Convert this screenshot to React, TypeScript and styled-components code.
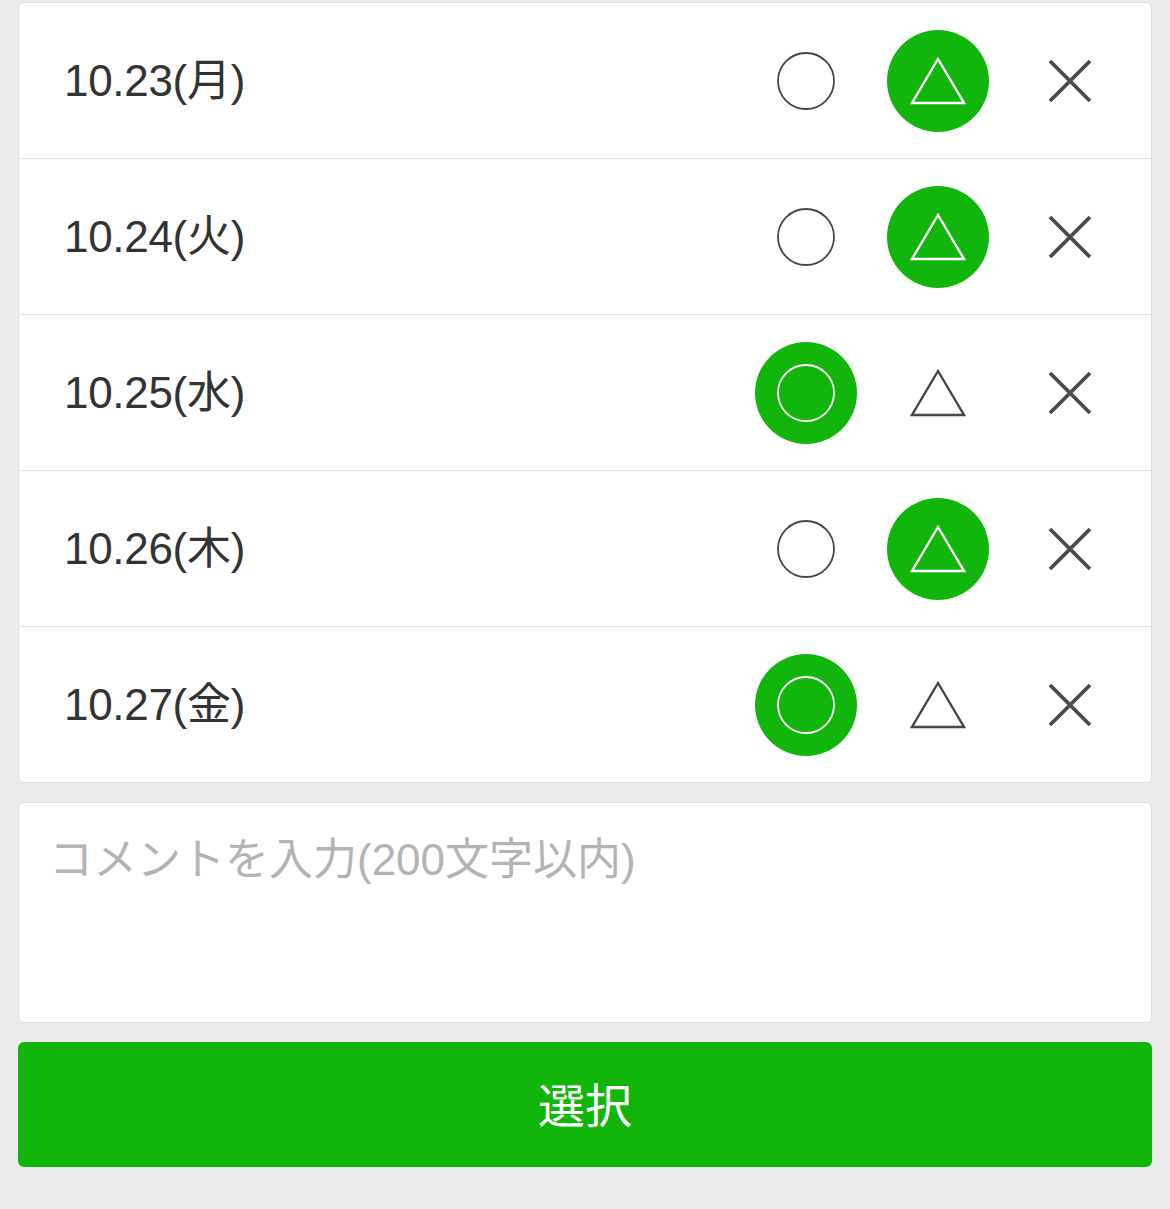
import React from 'react';
import styled, { createGlobalStyle } from 'styled-components';

const GREEN = '#11b50c';

const GlobalStyle = createGlobalStyle`
    html, body {
        margin: 0;
        padding: 0;
        background: #ececee;
    }
    body {
        font-family: 'Liberation Sans', 'Noto Sans CJK JP', sans-serif;
    }
`;

const Page = styled.div`
    display: flex;
    flex-direction: column;
    gap: 19px;
    padding: 2px 18px 43px 18px;
    min-height: 1209px;
    box-sizing: border-box;
`;

const Card = styled.div`
    background: #fff;
    border: 1px solid #dedee0;
    border-radius: 6px;
    overflow: hidden;
`;

const Row = styled.div`
    display: flex;
    align-items: center;
    height: 155px;
    padding: 0 0 0 45px;
    & + & {
        border-top: 1px solid #e3e3e5;
    }
`;

const DateLabel = styled.span`
    flex: 1;
    font-size: 44px;
    color: #333;
    letter-spacing: -0.3px;
    margin-bottom: 8px;
    font-family: 'Liberation Sans', 'Noto Sans CJK JP', sans-serif;
`;

const Choices = styled.div`
    display: grid;
    grid-template-columns: repeat(3, 132px);
    margin-right: 15px;
`;

const Choice = styled.button<{ $selected: boolean }>`
    width: 102px;
    height: 102px;
    border-radius: 50%;
    border: none;
    padding: 0;
    justify-self: center;
    display: flex;
    align-items: center;
    justify-content: center;
    cursor: pointer;
    background: ${(p) => (p.$selected ? GREEN : 'transparent')};
    color: ${(p) => (p.$selected ? '#fff' : '#474747')};
`;

const CommentBox = styled.textarea`
    display: block;
    height: 221px;
    box-sizing: border-box;
    resize: none;
    border: 1px solid #dedee0;
    border-radius: 6px;
    background: #fff;
    padding: 31px 30px;
    font-size: 44px;
    line-height: 1.2;
    letter-spacing: 0;
    font-family: 'Liberation Sans', 'Noto Sans CJK JP', sans-serif;
    color: #333;
    outline: none;
    &::placeholder {
        color: #b4b4b4;
    }
`;

const SubmitButton = styled.button`
    height: 125px;
    border: none;
    border-radius: 6px;
    background: ${GREEN};
    color: #fff;
    font-size: 47px;
    font-family: 'Noto Sans CJK JP', sans-serif;
    font-weight: 400;
    padding: 0 0 5px 0;
    cursor: pointer;
`;

type Mark = 'ok' | 'maybe' | 'ng';

const CircleIcon = () => (
    <svg width="58" height="58" viewBox="0 0 58 58">
        <circle cx="29" cy="29" r="28" fill="none" stroke="currentColor" strokeWidth="1.8" />
    </svg>
);

const TriangleIcon = () => (
    <svg width="56" height="50" viewBox="0 0 56 50">
        <path d="M28 3 L54 47 L2 47 Z" fill="none" stroke="currentColor" strokeWidth="2.4" strokeLinejoin="miter" />
    </svg>
);

const CrossIcon = () => (
    <svg width="44" height="44" viewBox="0 0 44 44">
        <path d="M2 2 L42 42 M42 2 L2 42" stroke="#4a4a4a" strokeWidth="3.8" />
    </svg>
);

const rows: { date: string; mark: Mark }[] = [
    { date: '10.23(月)', mark: 'maybe' },
    { date: '10.24(火)', mark: 'maybe' },
    { date: '10.25(水)', mark: 'ok' },
    { date: '10.26(木)', mark: 'maybe' },
    { date: '10.27(金)', mark: 'ok' },
];

const App = () => {
    return (
        <>
            <GlobalStyle />
            <Page>
                <Card>
                    {rows.map((r) => (
                        <Row key={r.date}>
                            <DateLabel>{r.date}</DateLabel>
                            <Choices>
                                <Choice $selected={r.mark === 'ok'}>
                                    <CircleIcon />
                                </Choice>
                                <Choice $selected={r.mark === 'maybe'}>
                                    <TriangleIcon />
                                </Choice>
                                <Choice $selected={r.mark === 'ng'}>
                                    <CrossIcon />
                                </Choice>
                            </Choices>
                        </Row>
                    ))}
                </Card>
                <CommentBox placeholder="コメントを入力(200文字以内)" />
                <SubmitButton>選択</SubmitButton>
            </Page>
        </>
    );
};

export default App;
